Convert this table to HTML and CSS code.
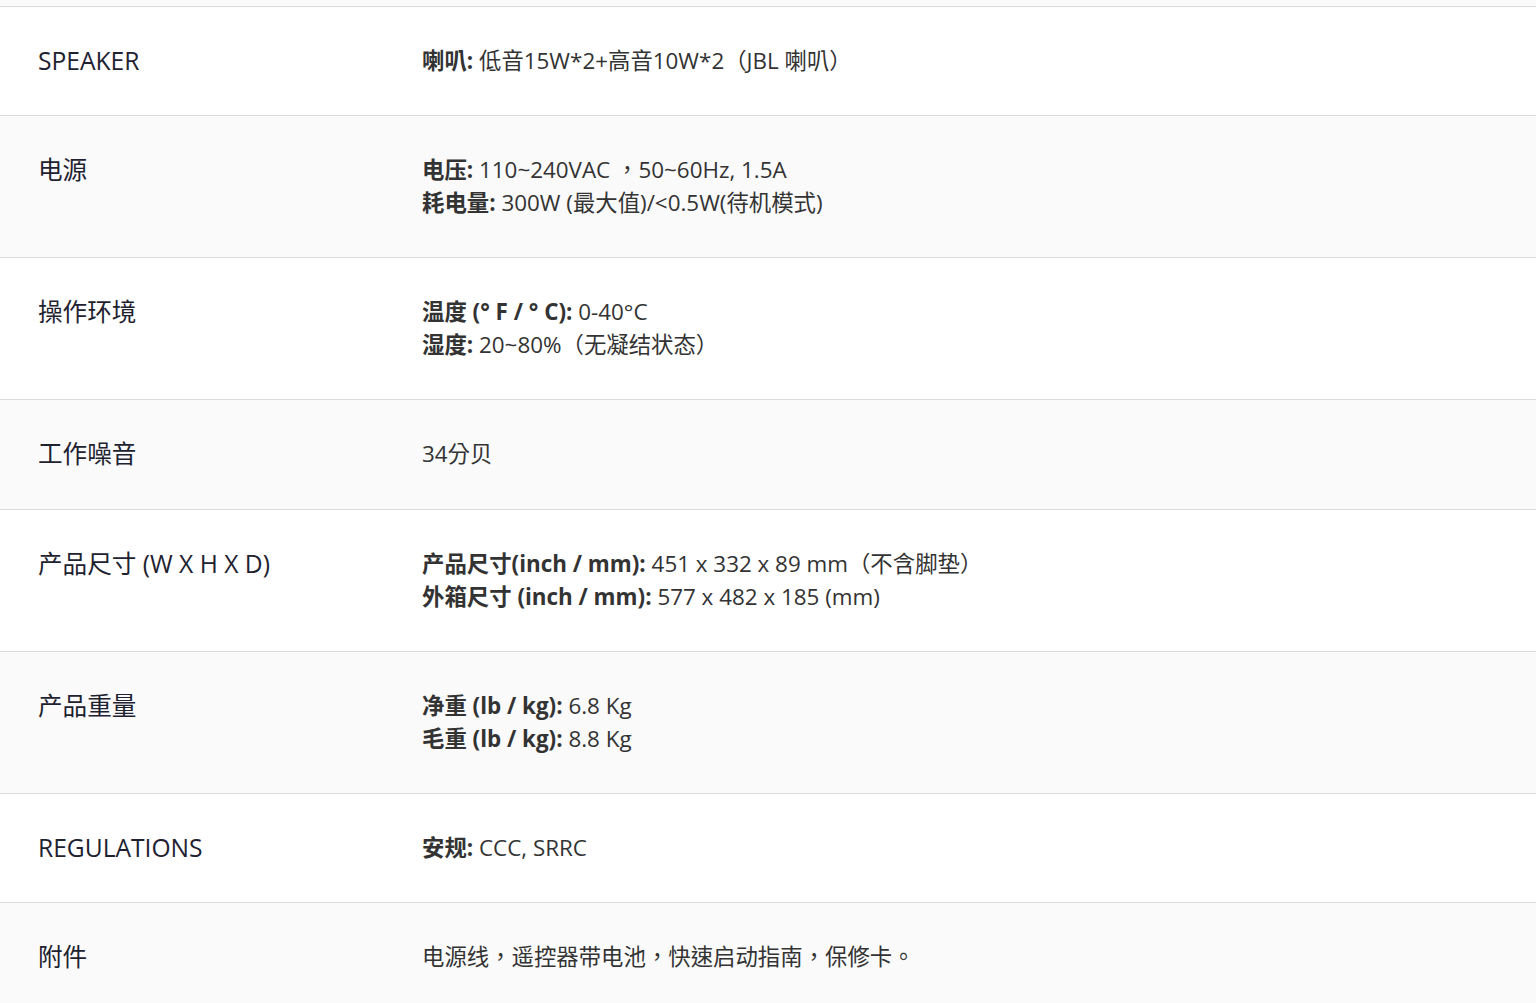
FILE: index.html
```html
<!DOCTYPE html>
<html lang="zh-TW">
<head>
<meta charset="utf-8">
<title>规格</title>
<link rel="stylesheet" href="styles.css">
</head>
<body>
<div class="specs">
  <div class="row alt stub"></div>
  <div class="row">
    <div class="label">SPEAKER</div>
    <div class="value"><div><b>喇叭:</b> 低音15W*2+高音10W*2（JBL 喇叭）</div></div>
  </div>
  <div class="row alt">
    <div class="label">电源</div>
    <div class="value">
      <div><b>电压:</b> 110~240VAC ，50~60Hz, 1.5A</div>
      <div><b>耗电量:</b> 300W (最大值)/&lt;0.5W(待机模式)</div>
    </div>
  </div>
  <div class="row">
    <div class="label">操作环境</div>
    <div class="value">
      <div><b>温度 (° F / ° C):</b> 0-40°C</div>
      <div><b>湿度:</b> 20~80%（无凝结状态）</div>
    </div>
  </div>
  <div class="row alt tall">
    <div class="label">工作噪音</div>
    <div class="value"><div>34分贝</div></div>
  </div>
  <div class="row">
    <div class="label">产品尺寸 (W X H X D)</div>
    <div class="value">
      <div><b>产品尺寸(inch / mm):</b> 451 x 332 x 89 mm（不含脚垫）</div>
      <div><b>外箱尺寸 (inch / mm):</b> 577 x 482 x 185 (mm)</div>
    </div>
  </div>
  <div class="row alt">
    <div class="label">产品重量</div>
    <div class="value">
      <div><b>净重 (lb / kg):</b> 6.8 Kg</div>
      <div><b>毛重 (lb / kg):</b> 8.8 Kg</div>
    </div>
  </div>
  <div class="row">
    <div class="label">REGULATIONS</div>
    <div class="value"><div><b>安规:</b> CCC, SRRC</div></div>
  </div>
  <div class="row alt">
    <div class="label">附件</div>
    <div class="value"><div>电源线，遥控器带电池，快速启动指南，保修卡。</div></div>
  </div>
</div>
</body>
</html>
```
FILE: styles.css
```css
html, body {
  margin: 0;
  padding: 0;
  background: #ffffff;
}
body {
  font-family: "Open Sans", "Noto Sans CJK TC", sans-serif;
  font-size: 22.4px;
  line-height: 33px;
  color: #333333;
}
.specs {
  display: flex;
  flex-direction: column;
}
.row {
  display: grid;
  grid-template-columns: 384px 1fr;
  align-items: start;
  padding: 37px 0 38px 38px;
  border-top: 1px solid #dcdcdc;
  background: #ffffff;
}
.row.tall {
  padding-bottom: 39px;
}
.row.alt {
  background: #fafafa;
}
.row.stub {
  padding: 0;
  height: 6px;
  border-top: none;
}
.label {
  font-size: 24.6px;
  line-height: 33px;
  color: #1e2230;
}
.value {
  text-spacing-trim: space-all;
}
.value > div {
  height: 33px;
}
.value b {
  font-weight: 700;
  color: #333333;
}
```
